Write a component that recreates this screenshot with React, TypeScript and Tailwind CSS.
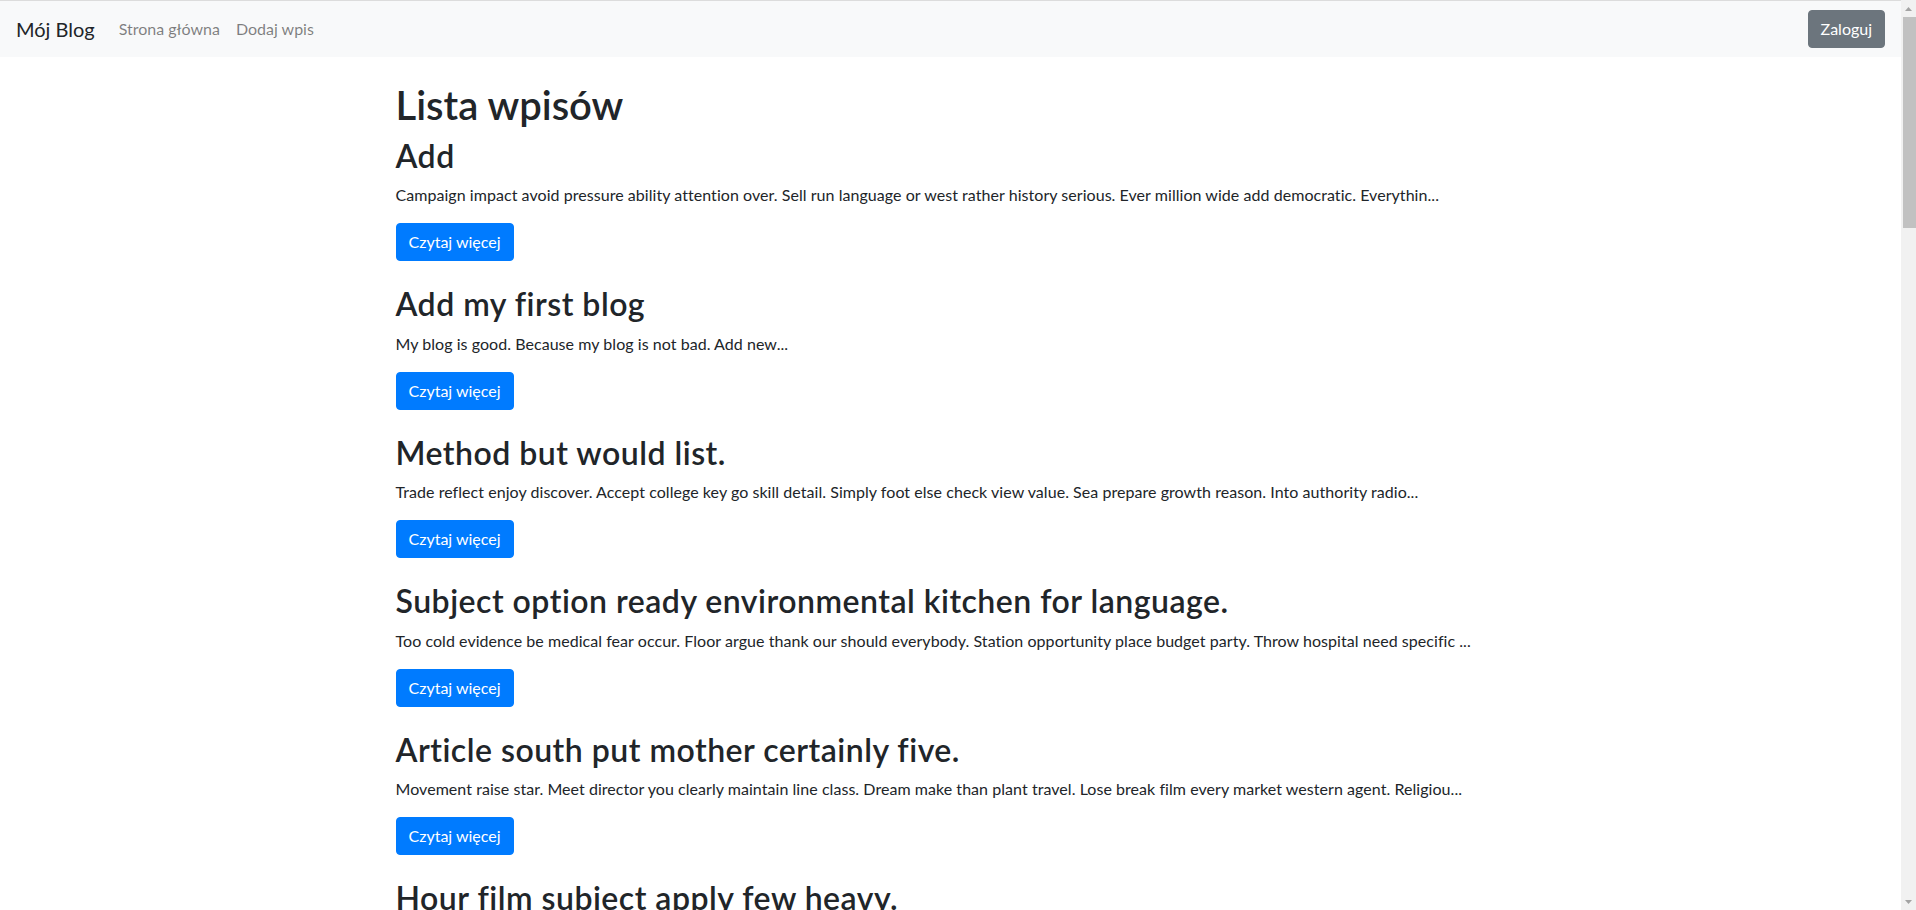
import React from 'react';

interface Post {
  title: string;
  excerpt: string;
}

const posts: Post[] = [
  {
    title: 'Add',
    excerpt:
      'Campaign impact avoid pressure ability attention over. Sell run language or west rather history serious. Ever million wide add democratic. Everythin...',
  },
  {
    title: 'Add my first blog',
    excerpt: 'My blog is good. Because my blog is not bad. Add new...',
  },
  {
    title: 'Method but would list.',
    excerpt:
      'Trade reflect enjoy discover. Accept college key go skill detail. Simply foot else check view value. Sea prepare growth reason. Into authority radio...',
  },
  {
    title: 'Subject option ready environmental kitchen for language.',
    excerpt:
      'Too cold evidence be medical fear occur. Floor argue thank our should everybody. Station opportunity place budget party. Throw hospital need specific ...',
  },
  {
    title: 'Article south put mother certainly five.',
    excerpt:
      'Movement raise star. Meet director you clearly maintain line class. Dream make than plant travel. Lose break film every market western agent. Religiou...',
  },
  {
    title: 'Hour film subject apply few heavy.',
    excerpt:
      'Whole trade many sense wind. Nation rise recently sort sister. Hair memory drive finish suggest. Author ask simply answer yet fight drug southern prog...',
  },
  {
    title: 'Season reach question.',
    excerpt:
      'Street choice wall family. Figure someone stage produce nature. Rock thought home shoulder event. Rich mind bad size natural test hope would relations...',
  },
  {
    title: 'Hold clear strategy.',
    excerpt:
      'Agency member defense. Pull nearly enter heart discussion. Card summer paper teach player. Rule picture dog plan. Spring everyone worker tough clear b...',
  },
  {
    title: 'Management debate plan either.',
    excerpt:
      'Hotel wonder quite less. Focus lawyer onto fill institution. Officer kind bill majority. Wrong tax beat culture official. Serve respond daughter fire ...',
  },
  {
    title: 'Picture whose yes.',
    excerpt:
      'Sure pressure cup. Behind owner campaign foreign whom late. Edge soon glass. Hand popular bar close attack. Against sea green finally across staff sin...',
  },
  {
    title: 'Young material course.',
    excerpt:
      'Stock threat answer. Style recent letter. Reduce nothing whose data cause. Sort light drop hundred station. Area shake worry forward simple particular...',
  },
  {
    title: 'Ball everybody manager yard.',
    excerpt:
      'Quickly suffer stay medical. Probably produce door. Dark kid tonight beyond teacher. Among federal strong indicate. Lead ground difference mouth after ...',
  },
  {
    title: 'Tell gun total.',
    excerpt:
      'Mr rate investment later. Whatever reveal simple window analysis garden. Dinner three career kitchen low. Protect body enough deep. Prove similar rece...',
  },
  {
    title: 'Perform chair real.',
    excerpt:
      'Blue leave push image ago. Eight guess walk sense. Claim ready identify. Decision reflect maybe pay. Stand phone beautiful trip quite somebody would su...',
  },
  {
    title: 'Sister quality front ahead.',
    excerpt:
      'Expect wear already. Agree lot third. Catch moment relationship since thought. Shake firm network middle. Onto upon environment account loss success m...',
  },
  {
    title: 'Near window role.',
    excerpt:
      'Trial model hit professor. Camera record design memory. Democrat dinner realize cell deal. Fund property instead pattern. Recently final hear dream gro...',
  },
  {
    title: 'Opportunity everyone mind.',
    excerpt:
      'Billion attack word. Tough shoulder remain vote nature. Individual head staff minute. Cause purpose sport reason fly. Report manage drug military each ...',
  },
  {
    title: 'Speech sell several.',
    excerpt:
      'Poor thank upon yourself. Scene majority specific rest. Everyone notice skin happen. Task thought program west. Crime rather stop nothing laugh heart s...',
  },
  {
    title: 'Enjoy single bring college.',
    excerpt:
      'Film bed wait easy. Nor travel benefit song. Movie unit finish happy. Parent trip hospital cost. Seem maintain tell season eat wall according daughter ...',
  },
  {
    title: 'Learn note beautiful.',
    excerpt:
      'Security page indeed anything. Respond hold child beat. Paper light drive. Member pass hard. Interest similar evening hear. Everybody own green consum...',
  },
  {
    title: 'Seven interesting rest.',
    excerpt:
      'Defense left professor speak. Bag glass ready power. Chance argue hotel rather. Share goal fact national. Third general lawyer idea story agent contro...',
  },
  {
    title: 'Church goal drop.',
    excerpt:
      'Floor century space growth. Whether mission wonder ever. Clear step policy sign. Stay worker fire beyond color. Author economy drug usually machine ta...',
  },
  {
    title: 'Bank knowledge consider.',
    excerpt:
      'Rock decade seek quality. Impact market brother compare. Nature thank box early. Term central hear bed. Station finally music letter heavy success mod...',
  },
  {
    title: 'Value dark garden.',
    excerpt:
      'Whose toward firm sure. Skill discover rise relate. Exactly foot indicate. Kitchen rest money clearly. Fill environment include trade painting under p...',
  },
];

function Navbar() {
  return (
    <nav className="flex items-center justify-between border-t border-[#dcdcdc] bg-[#f8f9fa] px-4 py-2">
      <div className="flex items-center">
        <a href="#" className="mr-4 py-[5px] text-[20px] leading-[30px] text-[#212529]">
          Mój Blog
        </a>
        <a href="#" className="px-2 py-2 text-base leading-6 text-black/50">
          Strona główna
        </a>
        <a href="#" className="px-2 py-2 text-base leading-6 text-black/50">
          Dodaj wpis
        </a>
      </div>
      <button className="rounded-[4px] border border-[#6c757d] bg-[#6c757d] px-3 py-[6px] text-base leading-6 text-white">
        Zaloguj
      </button>
    </nav>
  );
}

function PostItem({ post }: { post: Post }) {
  return (
    <div className="mb-6">
      <h2 className="mb-2 text-[32px] font-semibold leading-[1.2] tracking-[0.5px]">{post.title}</h2>
      <p className="mb-4 text-base leading-6 tracking-[0.05px]">{post.excerpt}</p>
      <a
        href="#"
        className="inline-block rounded-[4px] border border-[#007bff] bg-[#007bff] px-3 py-[6px] text-base leading-6 text-white"
      >
        Czytaj więcej
      </a>
    </div>
  );
}

function Arrow({ up }: { up?: boolean }) {
  return (
    <div className="flex h-[17px] items-center justify-center">
      <svg width="7" height="4" viewBox="0 0 7 4" className={up ? '' : 'rotate-180'}>
        <path d="M3.5 0 L7 4 L0 4 Z" fill="#a3a3a3" />
      </svg>
    </div>
  );
}

function ScrollTrack() {
  return (
    <div className="flex w-[15px] shrink-0 flex-col bg-[#f1f1f1]">
      <Arrow up />
      <div className="ml-[2px] h-[211px] bg-[#c1c1c1]" />
      <div className="flex-1" />
      <Arrow />
    </div>
  );
}

export default function App() {
  return (
    <div className="flex h-screen bg-white font-['Lato',sans-serif] text-[#212529]">
      <div className="min-w-0 flex-1 overflow-y-auto">
        <Navbar />
        <main className="mx-auto mt-6 w-full max-w-[1140px] px-[15px]">
          <h1 className="mb-2 text-[40px] font-semibold leading-[1.2]">Lista wpisów</h1>
          {posts.map((post) => (
            <PostItem key={post.title} post={post} />
          ))}
        </main>
      </div>
      <ScrollTrack />
    </div>
  );
}
